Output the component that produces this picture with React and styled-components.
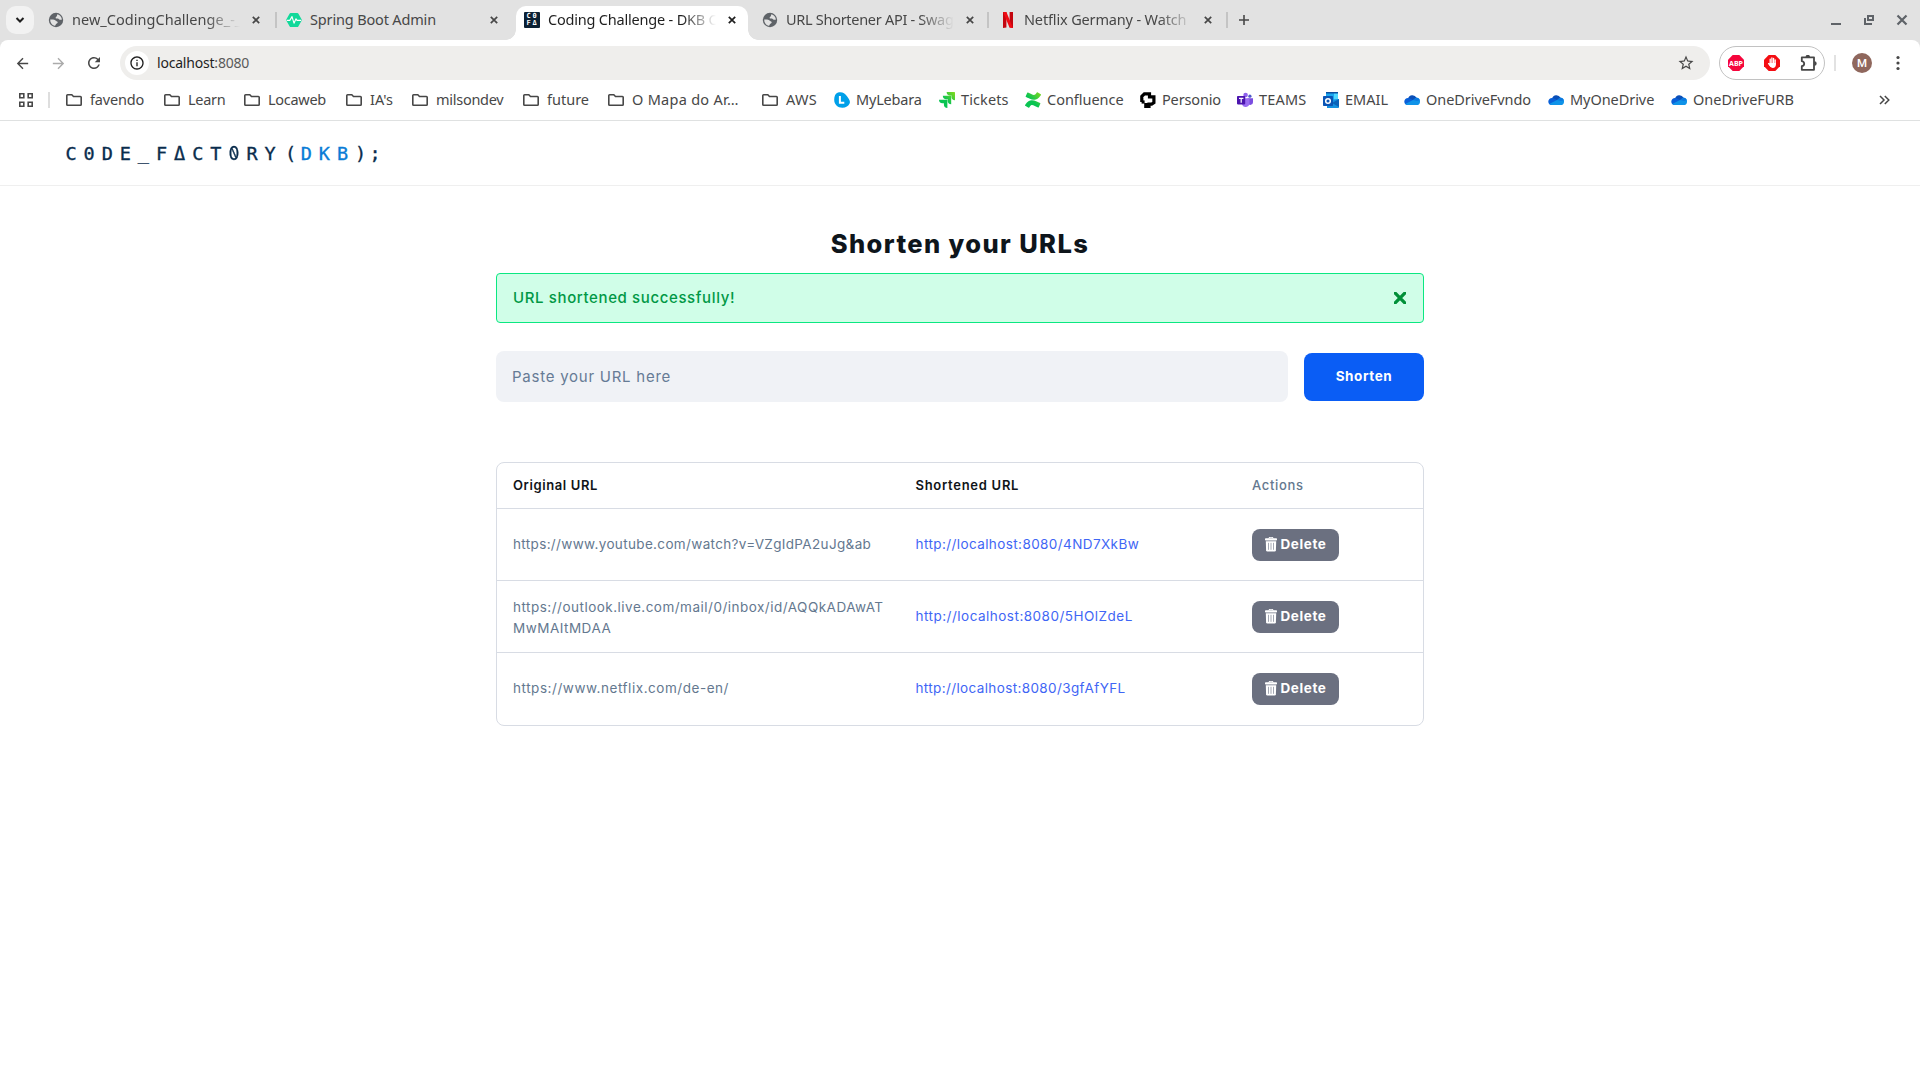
import React from "react";
import styled, { createGlobalStyle, css } from "styled-components";
import { MdArrowBack, MdArrowForward, MdRefresh, MdInfoOutline, MdStarBorder } from "react-icons/md";
import { SiJira, SiConfluence } from "react-icons/si";

const GlobalStyle = createGlobalStyle`
  * { box-sizing: border-box; }
  body { margin: 0; background: #fff; overflow: hidden; }
  button, input { font: inherit; border: 0; }
`;

const ui = css`font-family: "Noto Sans", "Open Sans", sans-serif;`;
const center = css`display: flex; align-items: center; justify-content: center;`;

const Window = styled.div`
  width: 1920px;
  height: 1080px;
  display: flex;
  flex-direction: column;
  background: #fff;
`;

/* ---------- tab strip ---------- */

const TabStrip = styled.div`
  ${ui}
  flex: none;
  height: 40px;
  display: flex;
  align-items: stretch;
  background: #e2e2e2;
  font-size: 14.5px;
  color: #474747;
`;

const TabSearch = styled.div`
  ${center}
  width: 28px;
  height: 28px;
  margin: 6px 0 0 6px;
  border-radius: 10px;
  background: #f2f2f2;
`;

const Tab = styled.div`
  position: relative;
  display: flex;
  align-items: center;
  width: ${(p) => p.$width}px;
  padding-left: ${(p) => p.$pad}px;
  ${(p) => p.$active && css`
    height: 34px;
    margin-top: 6px;
    padding-bottom: 6px;
    border-radius: 10px 10px 0 0;
    background: #fff;
    color: #1f1f1f;
    &::before, &::after {
      content: "";
      position: absolute;
      bottom: 0;
      width: 10px;
      height: 10px;
    }
    &::before { left: -10px; background: radial-gradient(circle at 0 0, transparent 9.5px, #fff 10px); }
    &::after { right: -10px; background: radial-gradient(circle at 100% 0, transparent 9.5px, #fff 10px); }
  `}
`;

const Favicon = styled.span`
  ${center}
  flex: none;
  width: 16px;
  height: 16px;
`;

const TabTitle = styled.span`
  width: ${(p) => p.$width}px;
  margin-left: ${(p) => p.$gap}px;
  padding-bottom: 2px;
  white-space: nowrap;
  letter-spacing: ${(p) => p.$track}px;
  ${(p) => p.$fade && css`mask-image: linear-gradient(to right, #000 calc(100% - 34px), transparent 100%);`}
`;

const TabClose = styled.span`
  ${center}
  width: 16px;
  height: 16px;
  margin-left: ${(p) => p.$gap}px;
`;

const TabDivider = styled.span`
  width: 2px;
  height: 16px;
  margin-top: 12px;
  background: #c4c4c4;
`;

const NewTab = styled.span`
  ${center}
  width: 31px;
`;

const WindowControls = styled.div`
  display: flex;
  align-items: center;
  gap: 17px;
  margin-left: auto;
  padding-right: 10px;
`;

/* ---------- toolbar ---------- */

const ToolbarBack = styled.div`
  flex: none;
  background: #e2e2e2;
`;

const Toolbar = styled.div`
  ${ui}
  height: 46px;
  display: flex;
  align-items: center;
  padding-left: 4px;
  border-radius: 8px 8px 0 0;
  background: #fff;
`;

const NavButton = styled.span`
  ${center}
  flex: none;
  width: 36px;
  color: ${(p) => (p.$off ? "#ababab" : "#474747")};
`;

const Omnibox = styled.div`
  display: flex;
  align-items: center;
  width: 1590px;
  flex: none;
  height: 34px;
  margin-left: 8px;
  padding: 0 15px 0 5px;
  border-radius: 17px;
  background: #efeeec;
`;

const SiteInfo = styled.span`
  ${center}
  width: 24px;
  height: 24px;
  border-radius: 50%;
  background: #fff;
  color: #1f1f1f;
`;

const Address = styled.span`
  flex: 1;
  margin-left: 8px;
  padding-bottom: 1px;
  font-size: 14px;
  letter-spacing: -0.2px;
  color: #1f1f1f;
`;
const Port = styled.span`color: #5a5a5a;`;

const Extensions = styled.div`
  display: flex;
  align-items: center;
  gap: 20px;
  flex: none;
  width: 106px;
  height: 34px;
  margin-left: 9px;
  padding-left: 8px;
  border: 1px solid #c2c2c2;
  border-radius: 17px;
`;

const ToolbarDivider = styled.span`
  flex: none;
  width: 2px;
  height: 16px;
  margin: 0 16px 0 9px;
  background: #e2e2e2;
`;

const Avatar = styled.span`
  ${center}
  flex: none;
  width: 20px;
  height: 20px;
  border-radius: 50%;
  background: #8f675d;
  color: #fff;
  font-family: Roboto, sans-serif;
  font-size: 11.5px;
  font-weight: 500;
`;

const Menu = styled.span`
  ${center}
  flex: 1;
  padding-left: 4px;
`;

/* ---------- bookmarks ---------- */

const Bookmarks = styled.div`
  ${ui}
  flex: none;
  height: 35px;
  display: flex;
  align-items: center;
  padding-bottom: 7px;
  border-bottom: 1px solid #dfe1e1;
  color: #474747;
  font-size: 14.5px;
`;

const AppsButton = styled.span`
  ${center}
  width: 14px;
  margin-left: 19px;
`;

const BookmarkDivider = styled.span`
  width: 2px;
  height: 16px;
  margin: 0 16px 0 15px;
  background: #dedede;
`;

const Bookmark = styled.span`
  display: flex;
  align-items: center;
  gap: ${(p) => (p.$folder ? 8 : 6)}px;
  width: ${(p) => p.$width}px;
  white-space: nowrap;
  letter-spacing: ${(p) => p.$track}px;
`;
const BookmarkName = styled.span`padding-bottom: 2px;`;

const More = styled.span`
  ${center}
  width: 16px;
  margin-left: auto;
  margin-right: 28px;
`;

/* ---------- page ---------- */

const SiteHeader = styled.header`
  flex: none;
  height: 65px;
  display: flex;
  align-items: center;
  padding: 2px 0 0 62px;
  border-bottom: 1px solid #efefef;
`;

const Logo = styled.div`
  display: flex;
  font-family: "DejaVu Sans Mono", monospace;
  font-size: 18.5px;
  line-height: 24px;
  color: #0a2d4d;
  -webkit-text-stroke: 0.35px currentColor;
`;

const Glyph = styled.span`
  width: ${(p) => p.$width || 18.1}px;
  padding-left: ${(p) => p.$shift || 0}px;
  text-align: center;
  color: ${(p) => (p.$blue ? "#0a7cd6" : "inherit")};
`;

const SlashZero = styled.span`
  display: inline-block;
  font-family: Inter, sans-serif;
  font-size: 19px;
  font-feature-settings: "zero";
  transform: scaleX(-0.88);
`;

const Main = styled.main`
  width: 928px;
  margin: 0 auto;
  padding-top: 38px;
  display: flex;
  flex-direction: column;
  font-family: Inter, sans-serif;
`;

const Heading = styled.h1`
  margin: 0 0 9px;
  height: 40px;
  line-height: 40px;
  text-align: center;
  font-size: 25.5px;
  font-weight: 800;
  letter-spacing: 1.4px;
  color: #0e151b;
`;

const Alert = styled.div`
  display: flex;
  align-items: center;
  justify-content: space-between;
  height: 50px;
  padding: 0 17px 1px 16px;
  border: 1px solid #0be881;
  border-radius: 4px;
  background: #d0fee8;
  color: #009845;
  font-size: 15px;
  font-weight: 500;
  letter-spacing: 0.62px;
`;

const Form = styled.form`
  display: flex;
  align-items: center;
  gap: 16px;
  margin: 28px 0 60px;
`;

const UrlInput = styled.input`
  flex: 1;
  height: 51px;
  padding: 0 16px;
  border-radius: 8px;
  background: #f0f2f6;
  font-size: 15px;
  letter-spacing: 0.75px;
  &::placeholder { color: #667b95; opacity: 1; }
`;

const ShortenButton = styled.button`
  width: 120px;
  height: 48px;
  padding: 0 0 1px;
  border-radius: 8px;
  background: #0a5df5;
  color: #fff;
  font-size: 13.5px;
  font-weight: 700;
  letter-spacing: 0.6px;
`;

const Table = styled.div`
  border: 1px solid #d8dce4;
  border-radius: 8px;
`;

const Row = styled.div`
  display: grid;
  grid-template-columns: 402.5px 336.5px 1fr;
  align-items: center;
  height: ${(p) => (p.$head ? 45 : 72)}px;
  padding: 0 0 ${(p) => (p.$head ? 1 : 0)}px 16px;
  font-size: ${(p) => (p.$head ? 13 : 13.5)}px;
  & + & { border-top: 1px solid #d8dce4; }
  &:last-child { height: 73px; padding-bottom: 1px; }
`;

const HeadCell = styled.span`
  line-height: 20px;
  font-weight: ${(p) => (p.$muted ? 500 : 600)};
  letter-spacing: ${(p) => p.$track}px;
  color: ${(p) => (p.$muted ? "#64788f" : "#101418")};
`;

const LongUrl = styled.span`
  line-height: 21px;
  padding-top: ${(p) => (p.$wrapped ? 2 : 0)}px;
  white-space: pre-line;
  color: #64788f;
  letter-spacing: ${(p) => p.$track}px;
`;

const ShortUrl = styled.a`
  line-height: 21px;
  color: #3f66f5;
  letter-spacing: ${(p) => p.$track}px;
`;

const DeleteButton = styled.button`
  ${center}
  gap: 4px;
  width: 87px;
  height: 32px;
  padding: 0;
  border-radius: 8px;
  background: #6b7080;
  color: #fff;
  font-size: 13.5px;
  font-weight: 700;
  letter-spacing: 0.6px;
`;
const DeleteLabel = styled.span`padding-bottom: 1px;`;

/* ---------- drawings ---------- */

const Cross = ({ size = 8, width = 1.7, color = "currentColor", round }) => (
  <svg width={size} height={size} viewBox="0 0 8 8">
    <path d="M.8.8l6.4 6.4M7.2.8L.8 7.2" stroke={color} strokeWidth={width} strokeLinecap={round ? "round" : "butt"} />
  </svg>
);

const Globe = () => (
  <svg width="16" height="16" viewBox="0 0 16 16">
    <circle cx="8" cy="8" r="7.2" fill="#5f6368" />
    <path d="M9.400 2.200c2.600.6 4.300 2.800 4.500 5.200-1 .6-2.300.5-2.900-.2-.6-.8-1.800-.6-2.800-.7-.9-.2-.7-1.400.1-1.800.9-.4.500-1.500 1.100-2.500z" fill="#e2e2e2" />
    <path d="M2.200 7.600c1.800-.3 4.300-.2 5.300.8.9.9 2.300.8 2.200 2-.1 1-1.400.9-1.800 1.800-.3.700-.5 1.500-1.400 1.600C3.900 13.200 2.100 10.700 2.200 7.600z" fill="#e2e2e2" />
  </svg>
);

const Folder = () => (
  <svg width="16" height="16" viewBox="0 0 16 16" fill="none" stroke="#474747" strokeWidth="1.6">
    <path d="M.8 12.4V3.6q0-.8.8-.8h4.2l1.7 1.7h6.9q.8 0 .8.8v7.1q0 .8-.8.8H1.6q-.8 0-.8-.8z" />
  </svg>
);

const Pulse = () => (
  <svg width="16" height="16" viewBox="0 0 16 16">
    <path d="M4.6 1h6.8q.6 0 .9.5L15.7 7.4q.3.6 0 1.2l-3.4 5.9q-.3.5-.9.5H4.6q-.6 0-.9-.5L.3 8.6q-.3-.6 0-1.2l3.4-5.9q.3-.5.9-.5z" fill="#12d99a" />
    <path d="M.8 8.4h3L6 4.6l2 6.6 2-4.4 1 1.6h4.2" fill="none" stroke="#fff" strokeWidth="1.1" strokeLinejoin="round" />
  </svg>
);

const CofaBox = styled.span`
  display: grid;
  grid-template-columns: 5px 5px;
  justify-content: center;
  align-content: center;
  width: 16px;
  height: 16px;
  column-gap: 1px;
  border-radius: 1px;
  background: #0b2033;
  color: #fff;
  font: 700 7px/7px "DejaVu Sans Mono", monospace;
  letter-spacing: 0;
`;
const Cofa = () => <CofaBox><span>C</span><span>0</span><span>F</span><span>Δ</span></CofaBox>;

const Netflix = () => (
  <svg width="16" height="16" viewBox="0 0 16 16">
    <path d="M3 0h3.4v15.6L3 16zM9.6 0H13v16l-3.4-.4z" fill="#c4060f" />
    <path d="M3 0h3.4L13 16l-3.5-.4z" fill="#f00b14" />
  </svg>
);

const Lebara = () => (
  <svg width="16" height="16" viewBox="0 0 16 16">
    <path d="M4 .5C8-.6 10.500 .8 13 4.300c2.400 3.200 3.500 5.200 2.600 7.200-1 2.300-3.800 4.300-7.200 4.300C3.600 15.800.2 12.300.2 7.800.2 4 1.400 1.200 4 .5z" fill="#00a0e9" />
    <path d="M5.900 4v6.800h4.400" fill="none" stroke="#fff" strokeWidth="2" />
  </svg>
);

const Personio = () => (
  <svg width="16" height="16" viewBox="0 0 16 16" fill="none" stroke="#000" strokeWidth="3.2">
    <path d="M1.800 10V4.400L4.400 1.800H9.500V4.900H13.900V10.600L11.600 12.200H9V14.400H5.800V11" />
    <path d="M1.600 10h3" />
  </svg>
);

const Teams = () => (
  <svg width="16" height="16" viewBox="0 0 16 16">
    <circle cx="12.900" cy="4.200" r="1.600" fill="#5059c9" />
    <path d="M10.500 6.300H16v4a2.600 2.600 0 0 1-5 1z" fill="#7b4de0" />
    <circle cx="8.600" cy="3" r="2.300" fill="#8f62ec" />
    <path d="M5 6.300h7.500v5A3.800 3.800 0 0 1 5 12z" fill="#9a6cf2" />
    <rect y="4" width="8.200" height="8.400" rx=".8" fill="#4b14ae" />
    <path d="M2 6.300h4.400M4.200 6.300v4.400" stroke="#fff" strokeWidth="1.200" />
  </svg>
);

const Outlook = () => (
  <svg width="16" height="16" viewBox="0 0 16 16">
    <path d="M3 0h12v9H3z" fill="#1aa7f0" />
    <path d="M11 1h4v7h-4z" fill="#50d9ff" />
    <path d="M3 0h12v1.500H3z" fill="#0b4fa0" />
    <path d="M4 8l12-1v8.200q0 .8-.8.8H4z" fill="#1490df" />
    <path d="M16 7v8L9 11z" fill="#0a62b8" />
    <rect y="4" width="10" height="10" rx=".8" fill="#0a55b5" />
    <circle cx="5" cy="9" r="2.300" fill="none" stroke="#fff" strokeWidth="1.500" />
  </svg>
);

const OneDrive = () => (
  <svg width="16" height="16" viewBox="0 0 16 16">
    <path d="M4 6.500a4.600 4.600 0 0 1 8.500-.7L9.500 9z" fill="#0a4fb8" />
    <path d="M3.700 13A3.500 3.500 0 0 1 .3 9.600C.3 7.500 2 6 4 6c1.300 0 2 .4 3.300 1.200L10.500 9z" fill="#0a5fd8" />
    <path d="M10 7.400c.8-.8 1.600-1.700 2.700-1.700A3.600 3.600 0 0 1 16 9.500 3.400 3.400 0 0 1 12.600 13H3.700c-1 0-1.900-.4-2.500-1z" fill="#0f93e8" />
    <path d="M9.200 8L12.400 5.600A3.800 3.800 0 0 1 15.700 8.200L13 9z" fill="#0b78e0" />
  </svg>
);

const JiraMark = styled(SiJira)`width: 16px; height: 16px; path { fill: url(#greenFade); }`;
const ConfluenceMark = styled(SiConfluence)`width: 16px; height: 16px; path { fill: url(#greenFade); }`;

const Defs = styled.svg`position: absolute;`;
const Gradients = () => (
  <Defs width="0" height="0">
    <defs>
      <linearGradient id="greenFade" x1="0" y1="1" x2="1" y2="0">
        <stop offset="0.450" stopColor="#0ac452" />
        <stop offset="1" stopColor="#86d91c" />
      </linearGradient>
    </defs>
  </Defs>
);

const AbpText = styled.text`font: 700 7px "Noto Sans", sans-serif;`;
const Abp = () => (
  <svg width="16" height="16" viewBox="0 0 16 16">
    <path d="M4.700 0h6.600L16 4.700v6.600L11.300 16H4.700L0 11.300V4.700z" fill="#f5063c" />
    <AbpText x="8" y="10.600" textAnchor="middle" textLength="14" lengthAdjust="spacingAndGlyphs" fill="#fff">ABP</AbpText>
  </svg>
);

const Hand = () => (
  <svg width="16" height="16" viewBox="0 0 16 16">
    <path d="M4.700 0h6.600L16 4.700v6.600L11.300 16H4.700L0 11.300V4.700z" fill="#f40d12" />
    <g stroke="#fff" strokeWidth="1.300" strokeLinecap="round">
      <path d="M6.200 9V4.200M7.900 8V3M9.600 8V3.400M11.200 9V5M4.600 8.600l2 2.600" />
    </g>
    <path d="M5.500 8h6.400v1.800c0 2-1.200 3.200-3 3.200-1.500 0-2.400-.8-3.400-2.400z" fill="#fff" />
  </svg>
);

const Puzzle = () => (
  <svg width="17" height="16" viewBox="0 0 17 16">
    <path d="M1.800 2.300H14V14.800H1.800V11.200C5 10.600 5 6.800 1.800 6.200z" fill="none" stroke="#474747" strokeWidth="1.800" strokeLinejoin="round" />
    <path d="M5.600 2a2.200 2.200 0 0 1 4.400 0zM14.400 6.200a2.300 2.300 0 0 1 0 4.600z" fill="#474747" />
  </svg>
);

const Trash = () => (
  <svg width="12" height="15" viewBox="0 0 12 15">
    <path d="M3.800 1.600Q3.800.3 5 .3h2Q8.200.3 8.200 1.600" fill="none" stroke="#fff" strokeWidth="1" />
    <rect y="1.300" width="12" height="2.200" rx=".8" fill="#fff" />
    <path d="M.8 4.200h10.400l-.3 9q-.1 1.300-1.300 1.300H2.400q-1.200 0-1.300-1.300z" fill="#fff" />
    <path d="M3.500 5.800v7M6 5.800v7M8.500 5.800v7" stroke="#9a9eaa" strokeWidth=".9" />
  </svg>
);

/* ---------- content ---------- */

const tabs = [
  { icon: <Globe />, title: "new_CodingChallenge_-_", width: 241, pad: 14, gap: 8, titleWidth: 168, close: 8, track: 0.03, fade: true, divider: true },
  { icon: <Pulse />, title: "Spring Boot Admin", width: 239, pad: 9, gap: 8, titleWidth: 166, close: 10, track: -0.16 },
  { icon: <Cofa />, title: "Coding Challenge - DKB C", width: 232, pad: 8, gap: 8, titleWidth: 168, close: 8, track: -0.2, fade: true, active: true },
  { icon: <Globe />, title: "URL Shortener API - Swag", width: 239, pad: 14, gap: 8, titleWidth: 168, close: 8, track: -0.29, fade: true, divider: true },
  { icon: <Netflix />, title: "Netflix Germany - Watch", width: 237, pad: 11, gap: 8, titleWidth: 169, close: 7, track: -0.15, fade: true, divider: true },
];

const bookmarks = [
  ["favendo", Folder, 98, -0.19],
  ["Learn", Folder, 80, -0.3],
  ["Locaweb", Folder, 102, -0.28],
  ["IA's", Folder, 66, 0],
  ["milsondev", Folder, 111, -0.27],
  ["future", Folder, 85, 0],
  ["O Mapa do Ar…", Folder, 154, 0.28],
  ["AWS", Folder, 72, 0.28],
  ["MyLebara", Lebara, 105, -0.2],
  ["Tickets", JiraMark, 86, 0.1],
  ["Confluence", ConfluenceMark, 115, -0.03],
  ["Personio", Personio, 97, -0.15],
  ["TEAMS", Teams, 86, 0.2],
  ["EMAIL", Outlook, 81, 0],
  ["OneDriveFvndo", OneDrive, 144, -0.06],
  ["MyOneDrive", OneDrive, 123, -0.06],
  ["OneDriveFURB", OneDrive, 125, 0],
];

const rows = [
  ["https://www.youtube.com/watch?v=VZgIdPA2uJg&ab", 0.35, "http://localhost:8080/4ND7XkBw", 0.41],
  ["https://outlook.live.com/mail/0/inbox/id/AQQkADAwAT\nMwMAItMDAA", 0.49, "http://localhost:8080/5HOlZdeL", 0.49],
  ["https://www.netflix.com/de-en/", 0.54, "http://localhost:8080/3gfAfYFL", 0.37],
];

const logo = [..."C0DE_FΔCT0RY(DKB);"];
const glyphShift = { 12: 5 };
const glyphWidth = { 17: 11 };

export default function App() {
  return (
    <Window>
      <GlobalStyle />
      <Gradients />
      <TabStrip>
        <TabSearch>
          <svg width="10" height="8" viewBox="0 0 10 8"><path d="M1.500 2L5 5.500 8.500 2" fill="none" stroke="#1f1f1f" strokeWidth="2" /></svg>
        </TabSearch>
        {tabs.map((t) => (
          <React.Fragment key={t.title}>
            <Tab $width={t.width} $pad={t.pad} $active={t.active}>
              <Favicon>{t.icon}</Favicon>
              <TabTitle $width={t.titleWidth} $gap={t.gap} $track={t.track} $fade={t.fade}>{t.title}</TabTitle>
              <TabClose $gap={t.close}><Cross /></TabClose>
            </Tab>
            {t.divider && <TabDivider />}
          </React.Fragment>
        ))}
        <NewTab>
          <svg width="10" height="10" viewBox="0 0 10 10"><path d="M5 0v10M0 5h10" stroke="#474747" strokeWidth="1.600" /></svg>
        </NewTab>
        <WindowControls>
          <svg width="16" height="12" viewBox="0 0 16 12"><path d="M3 10h10" stroke="#5f6368" strokeWidth="2" /></svg>
          <svg width="16" height="12" viewBox="0 0 16 12" fill="none" stroke="#5f6368" strokeWidth="2"><path d="M7 2h5v4H7z" /><path d="M4 4v6h7" /></svg>
          <svg width="16" height="12" viewBox="0 0 16 12"><path d="M3.500 1.500l9 9M12.500 1.500l-9 9" stroke="#5f6368" strokeWidth="2.200" /></svg>
        </WindowControls>
      </TabStrip>

      <ToolbarBack>
        <Toolbar>
          <NavButton><MdArrowBack size={17} /></NavButton>
          <NavButton $off><MdArrowForward size={17} /></NavButton>
          <NavButton><MdRefresh size={18} /></NavButton>
          <Omnibox>
            <SiteInfo><MdInfoOutline size={16} /></SiteInfo>
            <Address>localhost<Port>:8080</Port></Address>
            <MdStarBorder size={18} color="#474747" />
          </Omnibox>
          <Extensions>
            <Abp />
            <Hand />
            <Puzzle />
          </Extensions>
          <ToolbarDivider />
          <Avatar>M</Avatar>
          <Menu>
            <svg width="4" height="16" viewBox="0 0 4 16" fill="#474747"><circle cx="2" cy="2.500" r="1.600" /><circle cx="2" cy="8" r="1.600" /><circle cx="2" cy="13.500" r="1.600" /></svg>
          </Menu>
        </Toolbar>
      </ToolbarBack>

      <Bookmarks>
        <AppsButton>
          <svg width="14" height="14" viewBox="0 0 14 14" fill="none" stroke="#474747" strokeWidth="1.600">
            <path d="M.8.8h4v4h-4zM9.200.8h4v4h-4zM.8 9.200h4v4h-4zM9.200 9.200h4v4h-4z" />
          </svg>
        </AppsButton>
        <BookmarkDivider />
        {bookmarks.map(([name, Icon, width, track]) => (
          <Bookmark key={name} $width={width} $track={track} $folder={Icon === Folder}>
            <Icon />
            <BookmarkName>{name}</BookmarkName>
          </Bookmark>
        ))}
        <More>
          <svg width="11" height="10" viewBox="0 0 11 10"><path d="M1 1l4 4-4 4M5.800 1l4 4-4 4" fill="none" stroke="#474747" strokeWidth="1.500" /></svg>
        </More>
      </Bookmarks>

      <SiteHeader>
        <Logo>
          {logo.map((ch, i) => (
            <Glyph key={i} $blue={i > 12 && i < 16} $shift={glyphShift[i]} $width={glyphWidth[i]}>
              {i === 9 ? <SlashZero>0</SlashZero> : ch}
            </Glyph>
          ))}
        </Logo>
      </SiteHeader>

      <Main>
        <Heading>Shorten your URLs</Heading>
        <Alert>
          URL shortened successfully!
          <Cross size={12} width={2.2} color="#009038" round />
        </Alert>
        <Form>
          <UrlInput placeholder="Paste your URL here" />
          <ShortenButton type="button">Shorten</ShortenButton>
        </Form>
        <Table>
          <Row $head>
            <HeadCell $track={0.6}>Original URL</HeadCell>
            <HeadCell $track={0.72}>Shortened URL</HeadCell>
            <HeadCell $track={0.68} $muted>Actions</HeadCell>
          </Row>
          {rows.map(([long, longTrack, short, shortTrack]) => (
            <Row key={short}>
              <LongUrl $track={longTrack} $wrapped={long.includes("\n")}>{long}</LongUrl>
              <ShortUrl $track={shortTrack}>{short}</ShortUrl>
              <DeleteButton><Trash /><DeleteLabel>Delete</DeleteLabel></DeleteButton>
            </Row>
          ))}
        </Table>
      </Main>
    </Window>
  );
}
